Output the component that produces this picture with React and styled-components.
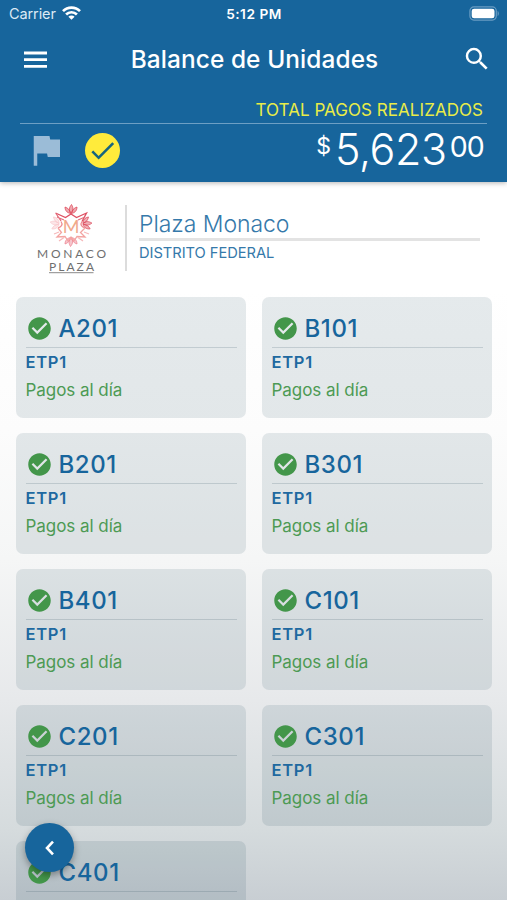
import React from "react";
import styled, { createGlobalStyle } from "styled-components";
import { MdSearch, MdFlag, MdCheck, MdCheckCircle } from "react-icons/md";

const GlobalStyle = createGlobalStyle`
  * {
    box-sizing: border-box;
  }
  body {
    margin: 0;
    overflow: hidden;
    font-family: Inter, "Liberation Sans", sans-serif;
  }
`;

const Screen = styled.div`
  position: relative;
  width: 507px;
  height: 900px;
  overflow: hidden;
  background: linear-gradient(
    to bottom,
    #ffffff 290px,
    #fcfcfc 430px,
    #f5f6f6 560px,
    #e7e9eb 700px,
    #d5dbdd 830px,
    #c8ced3 900px
  );
`;

const Header = styled.header`
  height: 182px;
  background: #17659c;
  color: #fff;
  box-shadow: 0 1px 5px rgba(0, 0, 0, 0.3);
`;

const StatusBar = styled.div`
  height: 28px;
  padding: 0 8px 0 9px;
  display: grid;
  grid-template-columns: 1fr auto 1fr;
  align-items: center;
  line-height: 28px;
`;

const Carrier = styled.div`
  display: flex;
  align-items: center;
  gap: 6px;
  font-size: 14.5px;
  letter-spacing: -0.1px;
  color: #dceaf5;

  svg {
    margin-top: -2px;
  }
`;

const Clock = styled.div`
  font-size: 13.7px;
  font-weight: 600;
  letter-spacing: 0.5px;
`;

const BatterySlot = styled.div`
  display: flex;
  justify-content: flex-end;

  svg {
    margin-top: -2px;
  }
`;

const Toolbar = styled.div`
  height: 62px;
  padding: 0 15px 0 24px;
  display: flex;
  align-items: center;
  justify-content: space-between;

  svg {
    display: block;
  }
`;

const Title = styled.h1`
  margin: 0;
  font-size: 24.4px;
  font-weight: 500;
  line-height: 30px;
  letter-spacing: 0.1px;
`;

const Totals = styled.div`
  margin: 0 20px;
`;

const TotalLabel = styled.div`
  height: 34px;
  padding: 10px 4px 0 0;
  border-bottom: 1px solid #6d9fc4;
  text-align: right;
  font-size: 17px;
  line-height: 21px;
  letter-spacing: 0.05px;
  color: #e9ec48;
`;

const TotalRow = styled.div`
  display: flex;
  height: 52px;
  padding: 0 3px 0 5px;
  justify-content: space-between;
`;

const Flags = styled.div`
  display: flex;
  align-items: center;
  gap: 18px;

  svg {
    display: block;
  }
`;

const YellowDot = styled.div`
  width: 35px;
  height: 35px;
  border-radius: 50%;
  background: #ffeb3b;
  color: #17657f;
  display: flex;
  align-items: center;
  justify-content: center;
`;

const Amount = styled.div`
  display: flex;
  align-items: flex-start;
`;

const Figure = styled.span`
  font-size: ${(p) => p.$size}px;
  font-weight: ${(p) => p.$weight};
  line-height: ${(p) => p.$size}px;
  letter-spacing: ${(p) => p.$spacing}px;
  margin: ${(p) => p.$margin};
`;

const Building = styled.section`
  display: flex;
  height: 115px;
  padding: 23px 27px 0 32px;
`;

const LogoBox = styled.div`
  width: 95px;
  height: 66px;
  padding-right: 15px;
  border-right: 2px solid #dcdcdc;
`;

const BuildingInfo = styled.div`
  flex: 1;
  padding: 4px 0 0 12px;
  color: #3579aa;
`;

const BuildingName = styled.div`
  height: 32px;
  padding-top: 1px;
  border-bottom: 3px solid #e3e3e3;
  font-size: 23px;
  font-weight: 300;
  line-height: 29px;
  letter-spacing: -0.05px;
`;

const BuildingPlace = styled.div`
  padding-top: 2px;
  font-size: 14.7px;
  line-height: 20px;
  letter-spacing: -0.05px;
`;

const UnitGrid = styled.main`
  display: grid;
  grid-template-columns: 1fr 1fr;
  gap: 15.5px;
  padding: 0 15px 0 15.5px;
`;

const UnitCard = styled.article`
  height: 120.6px;
  padding: 14px 9px 0 10px;
  border-radius: 7px;
  background: rgba(0, 45, 70, 0.1);
`;

const UnitHead = styled.div`
  height: 37px;
  display: flex;
  align-items: center;
  gap: 6px;
  border-bottom: 1px solid rgba(60, 90, 105, 0.2);

  svg {
    display: block;
    flex: none;
    margin-top: -1px;
    color: #43964a;
  }
`;

const UnitName = styled.div`
  font-size: 24px;
  font-weight: 500;
  line-height: 34px;
  letter-spacing: 0.6px;
  color: #17659c;
`;

const Stage = styled.div`
  margin-top: 4px;
  font-size: 16.5px;
  font-weight: 600;
  line-height: 20px;
  letter-spacing: 0.7px;
  color: #2069a0;
`;

const Status = styled.div`
  margin-top: 8px;
  font-size: 17px;
  line-height: 20px;
  letter-spacing: -0.05px;
  color: #4d9a54;
`;

const BackButton = styled.button`
  position: absolute;
  left: 25px;
  top: 823px;
  width: 49px;
  height: 49px;
  padding: 0;
  border: 0;
  border-radius: 50%;
  background: #17659c;
  color: #fff;
  display: flex;
  align-items: center;
  justify-content: center;
  box-shadow: 0 3px 7px rgba(0, 0, 0, 0.35);
`;

const units = ["A201", "B101", "B201", "B301", "B401", "C101", "C201", "C301", "C401"];

function WifiIcon() {
  return (
    <svg width="19" height="14" viewBox="0 0 19 14" fill="none" stroke="#fff" strokeWidth="2.7">
      <path d="M1 5.1a12 12 0 0 1 17 0" />
      <path d="M4.1 8.5a7.6 7.6 0 0 1 10.8 0" />
      <path d="M9.5 13.8 6.4 10.8a4.4 4.4 0 0 1 6.2 0Z" fill="#fff" stroke="none" />
    </svg>
  );
}

function BatteryIcon() {
  return (
    <svg width="30" height="15" viewBox="0 0 30 15">
      <rect x="0.9" y="0.9" width="26.4" height="13.2" rx="4" fill="none" stroke="#6a9cc2" strokeWidth="1.2" />
      <rect x="2.7" y="2.7" width="22.8" height="9.6" rx="2.4" fill="#fff" />
      <path d="M28.6 5v5c1.6-.6 1.6-4.4 0-5Z" fill="#6a9cc2" />
    </svg>
  );
}

function MenuIcon() {
  return (
    <svg width="23" height="17" viewBox="0 0 23 17" stroke="#fff" strokeWidth="2.8">
      <path d="M0 2h23M0 8.7h23M0 15.4h23" />
    </svg>
  );
}

function BackIcon() {
  return (
    <svg width="11" height="16" viewBox="0 0 11 16" fill="none" stroke="#fff" strokeWidth="2.6">
      <path d="M9 1.7 3 8l6 6.3" />
    </svg>
  );
}

function Petals({ angle, color }) {
  return (
    <g transform={`rotate(${angle} 39 20.5)`} fill={color} fillOpacity="0.45" stroke={color} strokeWidth="0.7">
      <path d="M39 8.5c-2.5-3-2-6 .5-9 2 3 2 6-.5 9Z" />
      <path d="M38.5 8.5c-4-.8-5.5-3.5-5.5-6.5 3 1 5 3 5.5 6.5ZM39.5 8.5c4-.8 5.5-3.5 5.5-6.5-3 1-5 3-5.5 6.5Z" />
    </g>
  );
}

function MonacoLogo() {
  return (
    <svg width="79" height="72" viewBox="0 0 79 72" overflow="visible">
      <Petals angle={0} color="#dc3f50" />
      <Petals angle={82} color="#dc4a5c" />
      <Petals angle={180} color="#ec7f8e" />
      <Petals angle={278} color="#f8c6ca" />
      <g fill="none" strokeWidth="1.3">
        <path d="M23.5 8 33.500 12.500 39 9l5.500 3.500L54.500 8 50 16.500" stroke="#de5063" />
        <path d="M24 8.500 29 16M25 12l7 3M53 12l-7 3" stroke="#e4707e" />
        <path d="M29 16.500c2 3 1 5-3 6.500M50 16.500c-2 3-1 5 3 6.500" stroke="#ee8c92" />
        <path d="m26 23 3.500 4.500-4.500 4.500 8-.5L36 36l3-4 3 4 3-4.500 8 .5-4.500-4.500L53 23" stroke="#f3a4a2" />
        <path d="m22 29 5-2M27 36l5-3.500M51 36l-5-3.500M57 29l-5-2" stroke="#f6b9bb" />
      </g>
      <text x="39.2" y="28" textAnchor="middle" fontFamily="Lato" fontSize="18" fill="#f0a98c">M</text>
      <text x="5" y="53.4" textLength="69" fontFamily="Lato" fontSize="12" fill="#6f6f6f">MONACO</text>
      <text x="17" y="65.8" textLength="45" fontFamily="Lato" fontSize="12" fill="#6f6f6f">PLAZA</text>
      <path d="M17 67.7H61.5" stroke="#8a8a8a" />
    </svg>
  );
}

export default function App() {
  return (
    <>
      <GlobalStyle />
      <Screen>
        <Header>
          <StatusBar>
            <Carrier>
              Carrier
              <WifiIcon />
            </Carrier>
            <Clock>5:12 PM</Clock>
            <BatterySlot>
              <BatteryIcon />
            </BatterySlot>
          </StatusBar>
          <Toolbar>
            <MenuIcon />
            <Title>Balance de Unidades</Title>
            <MdSearch size={30} />
          </Toolbar>
          <Totals>
            <TotalLabel>TOTAL PAGOS REALIZADOS</TotalLabel>
            <TotalRow>
              <Flags>
                <MdFlag size={42} color="#9bbcd7" />
                <YellowDot>
                  <MdCheck size={31} />
                </YellowDot>
              </Flags>
              <Amount>
                <Figure $size={23} $weight={400} $spacing={0} $margin="11px 4px 0 0">$</Figure>
                <Figure $size={43} $weight={300} $spacing={-0.4} $margin="4px 3px 0 0">5,623</Figure>
                <Figure $size={28.5} $weight={400} $spacing={-0.8} $margin="9px 0 0 0">00</Figure>
              </Amount>
            </TotalRow>
          </Totals>
        </Header>

        <Building>
          <LogoBox>
            <MonacoLogo />
          </LogoBox>
          <BuildingInfo>
            <BuildingName>Plaza Monaco</BuildingName>
            <BuildingPlace>DISTRITO FEDERAL</BuildingPlace>
          </BuildingInfo>
        </Building>

        <UnitGrid>
          {units.map((unit) => (
            <UnitCard key={unit}>
              <UnitHead>
                <MdCheckCircle size={27} />
                <UnitName>{unit}</UnitName>
              </UnitHead>
              <Stage>ETP1</Stage>
              <Status>Pagos al día</Status>
            </UnitCard>
          ))}
        </UnitGrid>

        <BackButton aria-label="Regresar">
          <BackIcon />
        </BackButton>
      </Screen>
    </>
  );
}
